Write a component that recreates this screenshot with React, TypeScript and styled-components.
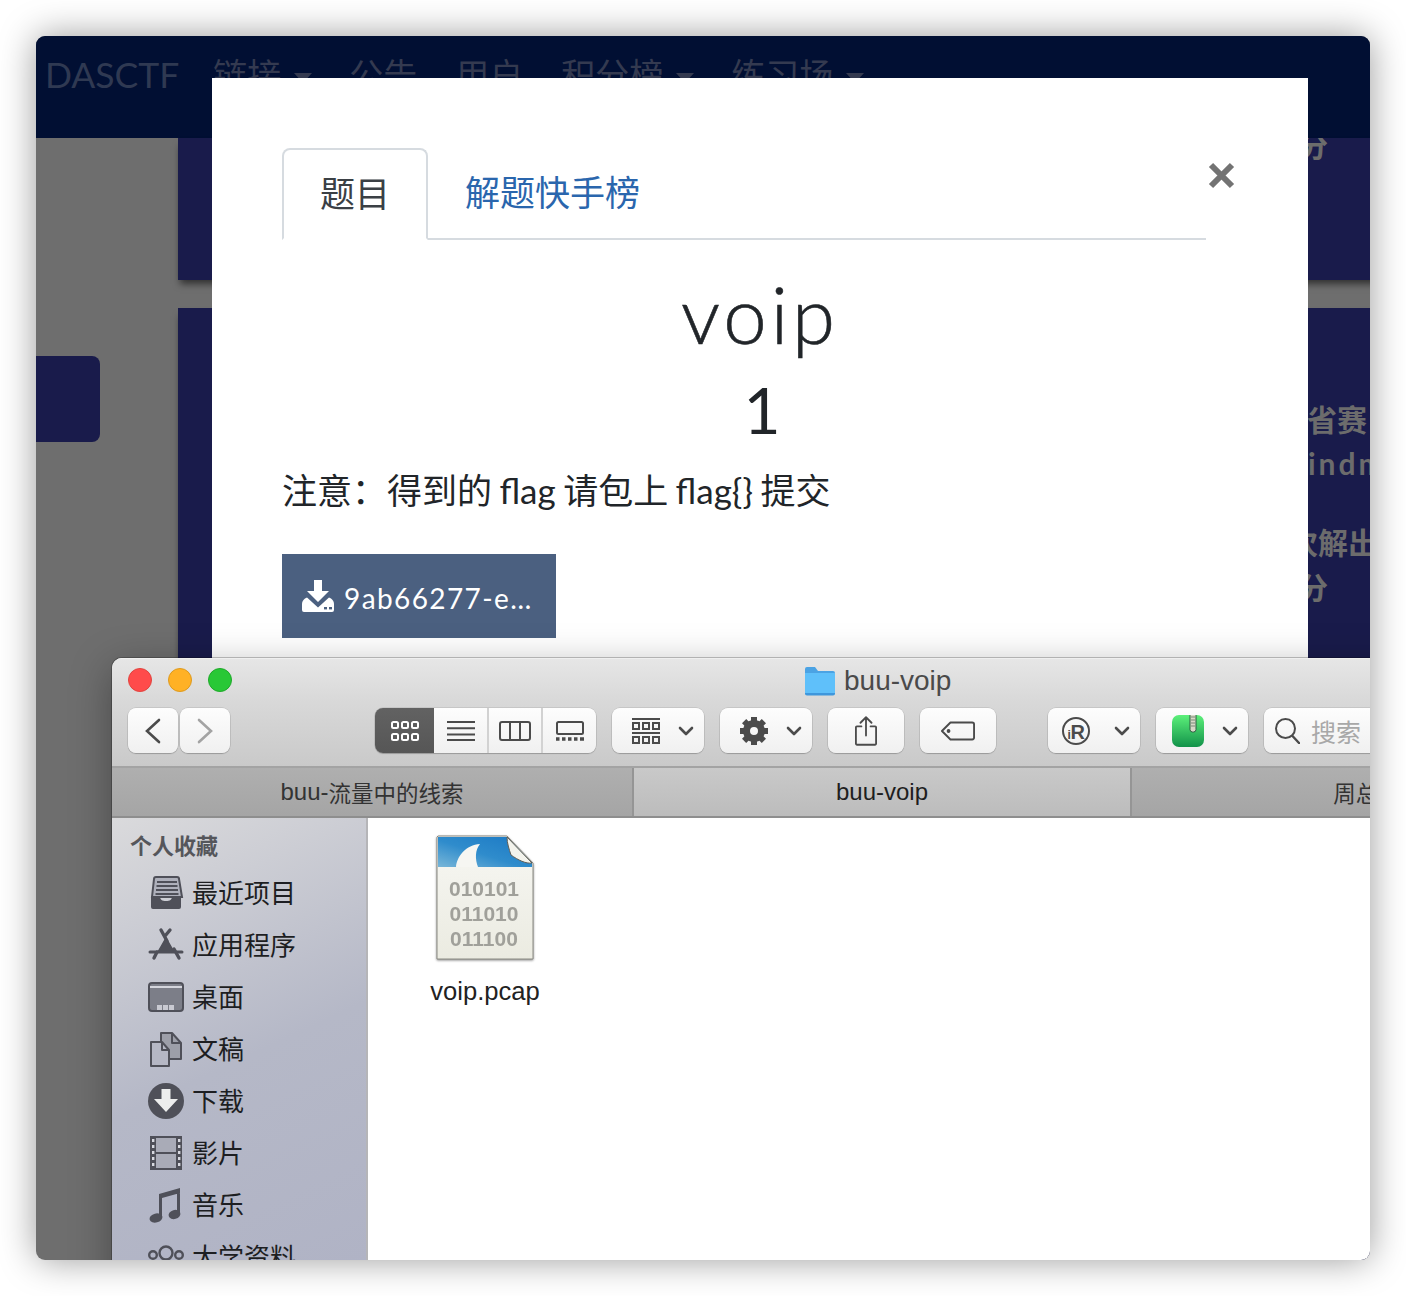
import React from "react";
import styled, { createGlobalStyle } from "styled-components";

const CJK = `"Noto Sans CJK SC"`;
const Global = createGlobalStyle`
  html, body { margin: 0; padding: 0; background: #fff; }
  * { box-sizing: border-box; }
`;

const Screen = styled.div`
  padding: 36px;
  width: 1406px;
  height: 1296px;
  overflow: hidden;
`;
const Stage = styled.div`
  position: relative;
  width: 1334px;
  height: 1224px;
  border-radius: 9px;
  overflow: hidden;
  background: #6e6e6e;
  box-shadow: 0 0 36px rgba(0, 0, 0, 0.4);
`;

/* ---------- dimmed page ---------- */
const Navbar = styled.nav`
  height: 102px;
  background: #010f33;
  display: flex;
  align-items: flex-start;
  padding: 18px 0 0 9px;
  overflow: hidden;
  font-family: Lato, ${CJK}, sans-serif;
`;
const Brand = styled.div`
  font-size: 35.500px;
  line-height: 42px;
  color: #2f3952;
  margin-right: 34px;
`;
const NavItem = styled.div<{ $caret?: boolean; $gap: number }>`
  font-size: 34px;
  line-height: 42px;
  color: #343a50;
  margin-right: ${(p) => p.$gap}px;
  display: flex;
  align-items: center;
  &::after {
    content: "";
    display: ${(p) => (p.$caret ? "block" : "none")};
    margin-left: 13px;
    margin-top: 6px;
    border-left: 9px solid transparent;
    border-right: 9px solid transparent;
    border-top: 10px solid #343a50;
  }
`;
const PageBody = styled.div`
  display: flex;
  height: 1122px;
`;
const LeftRail = styled.div`
  width: 142px;
  flex: none;
  padding-top: 218px;
`;
const RailCard = styled.div`
  width: 64px;
  height: 86px;
  background: #191b4b;
  border-radius: 0 8px 8px 0;
`;
const Panels = styled.div`
  flex: 1;
  display: flex;
  flex-direction: column;
  gap: 28px;
`;
const Panel = styled.div<{ $h: number }>`
  flex: none;
  height: ${(p) => p.$h}px;
  background: #191b4b;
  box-shadow: 0 6px 7px -2px rgba(0, 0, 0, 0.55);
  overflow: hidden;
  padding-left: 1070px;
  font-family: Lato, ${CJK}, sans-serif;
  font-weight: 700;
  font-size: 30px;
  color: #6c6c6c;
`;
const PanelLine = styled.div<{ $indent: number; $top?: number; $spaced?: boolean }>`
  white-space: nowrap;
  line-height: 44px;
  margin-left: ${(p) => p.$indent}px;
  margin-top: ${(p) => p.$top ?? 0}px;
  letter-spacing: ${(p) => (p.$spaced ? "3px" : "0")};
`;

/* ---------- modal ---------- */
const Modal = styled.div`
  position: absolute;
  left: 176px;
  top: 42px;
  width: 1096px;
  height: 800px;
  background: #fff;
  padding: 70px 102px 0 70px;
  font-family: Lato, ${CJK}, sans-serif;
  color: #212529;
`;
const Close = styled.svg`
  position: absolute;
  left: 996px;
  top: 84px;
  width: 28px;
  height: 28px;
`;
const TabRow = styled.div`
  display: flex;
  height: 92px;
  border-bottom: 2px solid #d6dbe0;
`;
const ActiveTab = styled.div`
  width: 146px;
  height: 92px;
  border: 2px solid #d6dbe0;
  border-bottom: 2px solid #fff;
  border-radius: 8px 8px 0 0;
  background: #fff;
  font-size: 35px;
  color: #3b4045;
  display: flex;
  align-items: center;
  justify-content: center;
  padding-bottom: 6px;
`;
const LinkTab = styled.div`
  padding: 0 0 6px 37px;
  height: 90px;
  display: flex;
  align-items: center;
  font-size: 35px;
  color: #2a66ad;
`;
const Title = styled.h1`
  margin: 26px -102px 0 -70px;
  text-align: center;
  font-weight: 300;
  font-size: 78px;
  line-height: 96px;
  letter-spacing: 4px;
  -webkit-text-stroke: 0.6px #212529;
`;
const Score = styled.div`
  margin: 2px -102px 0 -70px;
  padding-left: 4px;
  text-align: center;
  font-weight: 400;
  font-size: 64px;
  line-height: 92px;
`;
const Note = styled.p`
  margin: 7px 0 0;
  font-size: 35px;
  line-height: 54px;
  white-space: nowrap;
  word-spacing: -1.500px;
`;
const Download = styled.div`
  margin-top: 37px;
  width: 274px;
  height: 84px;
  background: #4b6080;
  display: flex;
  align-items: center;
  padding-left: 20px;
  gap: 10px;
  color: #fff;
  font-size: 28px;
  letter-spacing: 1.400px;
  white-space: nowrap;
`;
const DownloadName = styled.span`
  margin-top: 4px;
`;

/* ---------- finder ---------- */
const FinderShadow = styled.div`
  position: absolute;
  left: 76px;
  top: 622px;
  width: 1300px;
  height: 760px;
  border-radius: 10px 10px 0 0;
  box-shadow: 0 10px 40px rgba(0, 0, 0, 0.34), 0 0 0 1px rgba(0, 0, 0, 0.22);
`;
const Finder = styled.div`
  position: absolute;
  left: 76px;
  top: 622px;
  width: 1300px;
  height: 760px;
  border-radius: 10px 10px 0 0;
  overflow: hidden;
  font-family: "Liberation Sans", ${CJK}, sans-serif;
  display: flex;
  flex-direction: column;
  background: #fff;
`;
const Chrome = styled.div`
  background: linear-gradient(#e6e6e6, #d8d8d8 40%, #c9c9c9);
  border-top: 1px solid #efefef;
`;
const TitleRow = styled.div`
  height: 49px;
  display: flex;
  align-items: center;
  padding: 0 0 8px 16px;
`;
const Light = styled.span<{ $c: string; $b: string }>`
  width: 24px;
  height: 24px;
  border-radius: 50%;
  background: ${(p) => p.$c};
  border: 1px solid ${(p) => p.$b};
  margin-right: 16px;
`;
const WindowName = styled.div`
  margin: 2px 0 0 556px;
  display: flex;
  align-items: center;
  gap: 8px;
  font-size: 28px;
  color: #4a4a4a;
  white-space: nowrap;
`;
const Toolbar = styled.div`
  height: 60px;
  display: flex;
  align-items: flex-start;
  padding-left: 16px;
  border-bottom: 2px solid #a3a3a3;
`;
const Btn = styled.div<{ $w: number; $ml?: number; $pl?: number }>`
  flex: none;
  width: ${(p) => p.$w}px;
  height: 45px;
  margin-left: ${(p) => p.$ml ?? 0}px;
  padding: ${(p) => (p.$pl ? `0 10px 0 ${p.$pl}px` : "0")};
  display: flex;
  align-items: center;
  justify-content: ${(p) => (p.$pl ? "space-between" : "center")};
  background: linear-gradient(#fdfdfd, #f0f0f0);
  border-radius: 8px;
  box-shadow: 0 0 0 0.5px rgba(0, 0, 0, 0.16), 0 1px 1px rgba(0, 0, 0, 0.18);
`;
const Segments = styled.div`
  flex: none;
  margin-left: 145px;
  width: 221px;
  height: 45px;
  display: flex;
  border-radius: 8px;
  overflow: hidden;
  box-shadow: 0 0 0 0.5px rgba(0, 0, 0, 0.16), 0 1px 1px rgba(0, 0, 0, 0.18);
`;
const Segment = styled.div<{ $w: number; $on?: boolean }>`
  width: ${(p) => p.$w}px;
  display: flex;
  align-items: center;
  justify-content: center;
  background: ${(p) => (p.$on ? "linear-gradient(#626262, #565656)" : "linear-gradient(#fdfdfd, #f0f0f0)")};
  border-left: ${(p) => (p.$on ? "0" : "2px solid #d2d2d2")};
  &:nth-child(2) { border-left: 0; }
`;
const Search = styled.div`
  flex: none;
  width: 130px;
  height: 45px;
  margin-left: 16px;
  padding-left: 11px;
  display: flex;
  align-items: center;
  gap: 11px;
  background: linear-gradient(#fdfdfd, #f0f0f0);
  border-radius: 8px;
  box-shadow: 0 0 0 0.5px rgba(0, 0, 0, 0.16), 0 1px 1px rgba(0, 0, 0, 0.18);
  font-size: 25px;
  color: #a8a8a8;
  white-space: nowrap;
`;
const TabBar = styled.div`
  height: 50px;
  flex: none;
  display: flex;
  border-bottom: 2px solid #8e8e8e;
`;
const FinderTab = styled.div<{ $w: number; $on?: boolean }>`
  flex: none;
  width: ${(p) => p.$w}px;
  display: flex;
  align-items: center;
  justify-content: center;
  background: ${(p) => (p.$on ? "linear-gradient(#c9c9c9, #bcbcbc)" : "linear-gradient(#afafaf, #a5a5a5)")};
  border-right: 2px solid #959595;
  font-size: 24px;
  color: ${(p) => (p.$on ? "#1e1e1e" : "#333")};
  white-space: nowrap;
`;
const HanSmall = styled.span`
  font-size: 22.500px;
`;
const FinderMain = styled.div`
  flex: 1;
  display: flex;
`;
const Sidebar = styled.aside`
  width: 256px;
  flex: none;
  border-right: 2px solid #b5b5b8;
  background: linear-gradient(155deg, #dadadc 0%, #b5b8c7 42%, #adb0c4 100%);
  padding-top: 15px;
`;
const SideHead = styled.div`
  font-size: 22px;
  line-height: 28px;
  font-weight: 700;
  color: #55565b;
  padding-left: 18px;
  margin-bottom: 6px;
`;
const SideRow = styled.div`
  height: 52px;
  padding-left: 36px;
  display: flex;
  align-items: center;
  gap: 8px;
  font-size: 26px;
  color: #1d1e22;
`;
const SideLabel = styled.span`
  margin-bottom: 4px;
`;
const Files = styled.div`
  flex: 1;
  padding: 17px 0 0 57px;
`;
const FileItem = styled.div`
  width: 120px;
  display: flex;
  flex-direction: column;
  align-items: center;
  gap: 15px;
  font-size: 25.600px;
  line-height: 30px;
  color: #222;
  svg { filter: drop-shadow(0 1px 1px rgba(0, 0, 0, 0.45)); }
`;

/* ---------- icons ---------- */
const ink = "#4b4b4b";
const side = "#4f5059";

const Chevron = () => (
  <svg width="16" height="10" viewBox="0 0 16 10" fill="none" stroke={ink} strokeWidth="2.6" strokeLinecap="round" strokeLinejoin="round">
    <path d="M2 2l6 6 6-6" />
  </svg>
);
const Pointer = ({ dir, c }: { dir: "l" | "r"; c: string }) => (
  <svg width="16" height="26" viewBox="0 0 16 26" fill="none" stroke={c} strokeWidth="2.6" strokeLinecap="round">
    <path d={dir === "l" ? "M14 2L2 13l12 11" : "M2 2l12 11L2 24"} />
  </svg>
);
const GridIcon = () => (
  <svg width="28" height="20" viewBox="0 0 28 20" fill="none" stroke="#fff" strokeWidth="2">
    {[1, 11, 21].map((x) =>
      [1, 13].map((y) => <rect key={`${x}-${y}`} x={x} y={y} width="6" height="6" rx="1.5" />)
    )}
  </svg>
);
const ListIcon = () => (
  <svg width="28" height="20" viewBox="0 0 28 20" stroke={ink} strokeWidth="2">
    <path d="M0 1h28M0 7.3h28M0 13.6h28M0 19h28" />
  </svg>
);
const ColumnsIcon = () => (
  <svg width="32" height="20" viewBox="0 0 32 20" fill="none" stroke={ink} strokeWidth="2">
    <rect x="1" y="1" width="30" height="18" rx="2" />
    <path d="M11 1v18M21 1v18" />
  </svg>
);
const GalleryIcon = () => (
  <svg width="28" height="20" viewBox="0 0 28 20" fill="none">
    <rect x="1" y="1" width="26" height="12" rx="1.5" stroke={ink} strokeWidth="2" />
    <path d="M0 18h3.5M6 18h3.5M12 18h3.5M18 18h3.5M24 18h4" stroke={ink} strokeWidth="3.4" />
  </svg>
);
const GroupIcon = () => (
  <svg width="28" height="26" viewBox="0 0 28 26" fill="none" stroke={ink} strokeWidth="2">
    <path d="M0 1h28M0 15h28" />
    {[1, 11, 21].map((x) => (
      <React.Fragment key={x}>
        <rect x={x} y="5" width="6" height="6" />
        <rect x={x} y="19" width="6" height="6" />
      </React.Fragment>
    ))}
  </svg>
);
const GearIcon = () => (
  <svg width="28" height="28" viewBox="0 0 28 28">
    {[0, 45, 90, 135, 180, 225, 270, 315].map((a) => (
      <rect key={a} x="11" y="0" width="6" height="6" fill={ink} transform={`rotate(${a} 14 14)`} />
    ))}
    <circle cx="14" cy="14" r="7.500" fill="none" stroke={ink} strokeWidth="7" />
  </svg>
);
const ShareIcon = () => (
  <svg width="22" height="30" viewBox="0 0 24 32" fill="none" stroke={ink} strokeWidth="2" strokeLinecap="round" strokeLinejoin="round">
    <path d="M7 11H2a1 1 0 0 0-1 1v18a1 1 0 0 0 1 1h20a1 1 0 0 0 1-1V12a1 1 0 0 0-1-1h-5" />
    <path d="M12 21V2M6 7l6-6 6 6" />
  </svg>
);
const TagIcon = () => (
  <svg width="34" height="20" viewBox="0 0 36 20" fill="none" stroke={ink} strokeWidth="2" strokeLinejoin="round">
    <path d="M10 1h23a2 2 0 0 1 2 2v14a2 2 0 0 1-2 2H10L1 10z" />
    <circle cx="8" cy="10" r="1" fill={ink} />
  </svg>
);
const RIcon = () => (
  <svg width="28" height="28" viewBox="0 0 28 28" fill="none">
    <circle cx="14" cy="14" r="13" stroke={ink} strokeWidth="2" />
    <g fontFamily="Liberation Sans" fontWeight="700" fill={ink}>
      <text x="5.500" y="21.500" fontSize="12">i</text>
      <text x="8.500" y="21.500" fontSize="20">R</text>
    </g>
  </svg>
);
const ZipIcon = () => (
  <svg width="32" height="32" viewBox="0 0 32 32">
    <defs>
      <linearGradient id="zipGreen" x1="0" y1="0" x2="0" y2="1">
        <stop offset="0" stopColor="#5cf07a" />
        <stop offset="1" stopColor="#12924a" />
      </linearGradient>
    </defs>
    <rect width="32" height="32" rx="7" fill="url(#zipGreen)" />
    <rect x="18" y="-2" width="6" height="19" rx="2.500" fill="#d8d8c8" stroke="#2f5d40" strokeWidth="1" />
    <path d="M19 2h4M19 5h4M19 8h4M19 11h4" stroke="#7b8a76" strokeWidth="1" />
  </svg>
);
const SearchIcon = () => (
  <svg width="25" height="26" viewBox="0 0 25 26" fill="none" stroke={ink} strokeWidth="2" strokeLinecap="round">
    <circle cx="10.5" cy="10.5" r="9.5" />
    <path d="M17.5 18l6.5 7" strokeWidth="2.4" />
  </svg>
);
const FolderIcon = () => (
  <svg width="32" height="30" viewBox="0 0 32 30">
    <path d="M1 3a2 2 0 0 1 2-2h8l3 4h15a2 2 0 0 1 2 2v2H1z" fill="#4ba3e4" />
    <path d="M1 7h30v20a2 2 0 0 1-2 2H3a2 2 0 0 1-2-2z" fill="#5fc0fa" />
    <path d="M1 27h30v.5a2 2 0 0 1-2 2H3a2 2 0 0 1-2-2z" fill="#3f97dc" />
  </svg>
);
const DownloadIcon = () => (
  <svg width="32" height="32" viewBox="0 0 32 32" style={{ flex: "none" }}>
    <path d="M12 0h8v11h7L16 22 5 11h7z" fill="#fff" />
    <path d="M0 24c0-2 1-4 3-5.500l2-1 11 10 11-10 2 1c2 1.500 3 3.500 3 5.500v6a2 2 0 0 1-2 2H2a2 2 0 0 1-2-2z" fill="#fff" />
    <rect x="22" y="27" width="3" height="2.400" fill="#4b6080" />
    <rect x="27" y="27" width="3" height="2.400" fill="#4b6080" />
  </svg>
);
const RecentIcon = () => (
  <svg width="36" height="36" viewBox="0 0 36 36" fill="none">
    <path d="M8 2h21a2 2 0 0 1 2 2l3 18H4L6 4a2 2 0 0 1 2-2z" fill="#aeb0bb" stroke={side} strokeWidth="2" />
    <path d="M9 7h20M8.500 11h21M8 15h22M7.500 19h23" stroke={side} strokeWidth="2" />
    <path d="M3 21h9c0 4 2 5 6 5s6-1 6-5h9v11a2 2 0 0 1-2 2H5a2 2 0 0 1-2-2z" fill={side} />
  </svg>
);
const AppsIcon = () => (
  <svg width="36" height="36" viewBox="0 0 36 36" fill="none" stroke={side} strokeLinecap="round">
    <path d="M19 14l-6-11M17 9l5-6" strokeWidth="3.400" />
    <path d="M18 11L10 25h16z" fill={side} strokeWidth="1.500" strokeLinejoin="round" />
    <path d="M2 25h32" strokeWidth="3" />
    <path d="M9 25l-3 6M26 22l5 9" strokeWidth="3.400" />
  </svg>
);
const DesktopIcon = () => (
  <svg width="36" height="30" viewBox="0 0 36 30">
    <rect x="1" y="1" width="34" height="28" rx="3" fill="#7c7e88" stroke={side} strokeWidth="2" />
    <path d="M2 5h32" stroke="#d4d5dc" strokeWidth="2" />
    <path d="M9 23h5v5H9zM15 23h5v5h-5zM21 23h5v5h-5z" fill="#c9cad2" />
  </svg>
);
const DocsIcon = () => (
  <svg width="36" height="36" viewBox="0 0 36 36" fill="none" stroke={side} strokeWidth="2" strokeLinejoin="round">
    <path d="M13 2h11l9 10v16H13z" fill="#9d9fa9" />
    <path d="M24 2v10h9" />
    <path d="M3 11h11l7 8v16H3z" fill="#b5b7c4" />
    <path d="M14 11v8h7" />
  </svg>
);
const DownIcon = () => (
  <svg width="36" height="36" viewBox="0 0 36 36">
    <circle cx="18" cy="18" r="18" fill={side} />
    <path d="M13.500 6h9v10h7.500L18 29 6 16h7.500z" fill="#eceded" />
  </svg>
);
const FilmIcon = () => (
  <svg width="36" height="36" viewBox="0 0 36 36">
    <rect x="2" y="1" width="32" height="34" fill={side} />
    <rect x="8" y="3" width="20" height="14" fill="#a9abb7" />
    <rect x="8" y="19" width="20" height="14" fill="#a9abb7" />
    {[4, 10, 16, 22, 28].map((y) => (
      <React.Fragment key={y}>
        <rect x="4" y={y} width="2.400" height="3" fill="#d8d9e0" />
        <rect x="30" y={y} width="2.400" height="3" fill="#d8d9e0" />
      </React.Fragment>
    ))}
  </svg>
);
const MusicIcon = () => (
  <svg width="36" height="36" viewBox="0 0 36 36" fill={side}>
    <path d="M11 7l21-6v5L14 11v20h-3zM29 5h3v23h-3z" />
    <ellipse cx="8" cy="31" rx="6.500" ry="4.500" transform="rotate(-15 8 31)" />
    <ellipse cx="26.500" cy="27.500" rx="6" ry="4.500" transform="rotate(-15 26.500 27.500)" />
  </svg>
);
const GroupSideIcon = () => (
  <svg width="36" height="36" viewBox="0 0 36 36" fill="none" stroke={side} strokeWidth="2.400" style={{ marginTop: 8 }}>
    <circle cx="18" cy="10" r="6.500" />
    <circle cx="5" cy="12" r="3.800" />
    <circle cx="31" cy="12" r="3.800" />
  </svg>
);
const PcapIcon = () => (
  <svg width="98" height="126" viewBox="0 0 98 126">
    <defs>
      <linearGradient id="pcapBlue" x1="0" y1="1" x2="1" y2="0">
        <stop offset="0" stopColor="#78b6d8" />
        <stop offset="0.45" stopColor="#2f8ccc" />
        <stop offset="1" stopColor="#1a78c4" />
      </linearGradient>
      <linearGradient id="pcapPaper" x1="0" y1="0" x2="0" y2="1">
        <stop offset="0" stopColor="#f7f7f3" />
        <stop offset="1" stopColor="#ebebe1" />
      </linearGradient>
    </defs>
    <path d="M2 1h69l26 27v96H1V2z" fill="url(#pcapPaper)" stroke="#8a8a82" strokeWidth="1" />
    <path d="M2 2h69l25 26v4H2z" fill="url(#pcapBlue)" />
    <path d="M20 32c1-11 10-22 24-23-5 6-5 15-2 23z" fill="#f6f6f2" />
    <path d="M71 2L96 28C90 29 82 25 75 20 73 14 71 8 71 2z" fill="#f3f3ec" stroke="#5f5f58" strokeWidth="1" />
    <g fontFamily="Liberation Sans" fontWeight="700" fontSize="21" fill="#a0a09a" textAnchor="middle">
      <text x="48" y="61">010101</text>
      <text x="48" y="86">011010</text>
      <text x="48" y="111">011100</text>
    </g>
  </svg>
);

export default function App() {
  return (
    <Screen>
      <Global />
      <Stage>
        <Navbar>
          <Brand>DASCTF</Brand>
          <NavItem $caret $gap={37}>链接</NavItem>
          <NavItem $gap={38}>公告</NavItem>
          <NavItem $gap={38}>用户</NavItem>
          <NavItem $caret $gap={37}>积分榜</NavItem>
          <NavItem $caret $gap={0}>练习场</NavItem>
        </Navbar>
        <PageBody>
          <LeftRail>
            <RailCard />
          </LeftRail>
          <Panels>
            <Panel $h={142}>
              <PanelLine $indent={50} $top={-15}>分</PanelLine>
            </Panel>
            <Panel $h={1000}>
              <PanelLine $indent={59} $top={89}>省赛</PanelLine>
              <PanelLine $indent={60} $spaced>indm</PanelLine>
              <PanelLine $indent={40} $top={35}>次解出</PanelLine>
              <PanelLine $indent={50} $top={1}>分</PanelLine>
            </Panel>
          </Panels>
        </PageBody>

        <Modal>
          <Close viewBox="0 0 28 28" stroke="#737373" strokeWidth="6">
            <path d="M3 3l21 21M24 3L3 24" />
          </Close>
          <TabRow>
            <ActiveTab>题目</ActiveTab>
            <LinkTab>解题快手榜</LinkTab>
          </TabRow>
          <Title>voip</Title>
          <Score>1</Score>
          <Note>注意：得到的 flag 请包上 flag{"{}"} 提交</Note>
          <Download>
            <DownloadIcon />
            <DownloadName>9ab66277-e…</DownloadName>
          </Download>
        </Modal>

        <FinderShadow />
        <Finder>
          <Chrome>
            <TitleRow>
              <Light $c="#ff4b4b" $b="#e0443e" />
              <Light $c="#ffb125" $b="#dd9a1f" />
              <Light $c="#28c836" $b="#1fa92a" />
              <WindowName>
                <FolderIcon />
                buu-voip
              </WindowName>
            </TitleRow>
            <Toolbar>
              <Btn $w={50}><Pointer dir="l" c="#4b4b4b" /></Btn>
              <Btn $w={50} $ml={2}><Pointer dir="r" c="#a3a3a3" /></Btn>
              <Segments>
                <Segment $w={59} $on><GridIcon /></Segment>
                <Segment $w={53}><ListIcon /></Segment>
                <Segment $w={54}><ColumnsIcon /></Segment>
                <Segment $w={55}><GalleryIcon /></Segment>
              </Segments>
              <Btn $w={92} $ml={16} $pl={20}><GroupIcon /><Chevron /></Btn>
              <Btn $w={92} $ml={16} $pl={20}><GearIcon /><Chevron /></Btn>
              <Btn $w={76} $ml={16}><ShareIcon /></Btn>
              <Btn $w={76} $ml={16}><TagIcon /></Btn>
              <Btn $w={92} $ml={52} $pl={14}><RIcon /><Chevron /></Btn>
              <Btn $w={92} $ml={16} $pl={16}><ZipIcon /><Chevron /></Btn>
              <Search><SearchIcon />搜索</Search>
            </Toolbar>
          </Chrome>
          <TabBar>
            <FinderTab $w={522}>buu-<HanSmall>流量中的线索</HanSmall></FinderTab>
            <FinderTab $w={498} $on>buu-voip</FinderTab>
            <FinderTab $w={472}><HanSmall>周总结</HanSmall></FinderTab>
          </TabBar>
          <FinderMain>
            <Sidebar>
              <SideHead>个人收藏</SideHead>
              <SideRow><RecentIcon /><SideLabel>最近项目</SideLabel></SideRow>
              <SideRow><AppsIcon /><SideLabel>应用程序</SideLabel></SideRow>
              <SideRow><DesktopIcon /><SideLabel>桌面</SideLabel></SideRow>
              <SideRow><DocsIcon /><SideLabel>文稿</SideLabel></SideRow>
              <SideRow><DownIcon /><SideLabel>下载</SideLabel></SideRow>
              <SideRow><FilmIcon /><SideLabel>影片</SideLabel></SideRow>
              <SideRow><MusicIcon /><SideLabel>音乐</SideLabel></SideRow>
              <SideRow><GroupSideIcon /><SideLabel>大学资料</SideLabel></SideRow>
            </Sidebar>
            <Files>
              <FileItem>
                <PcapIcon />
                voip.pcap
              </FileItem>
            </Files>
          </FinderMain>
        </Finder>
      </Stage>
    </Screen>
  );
}
